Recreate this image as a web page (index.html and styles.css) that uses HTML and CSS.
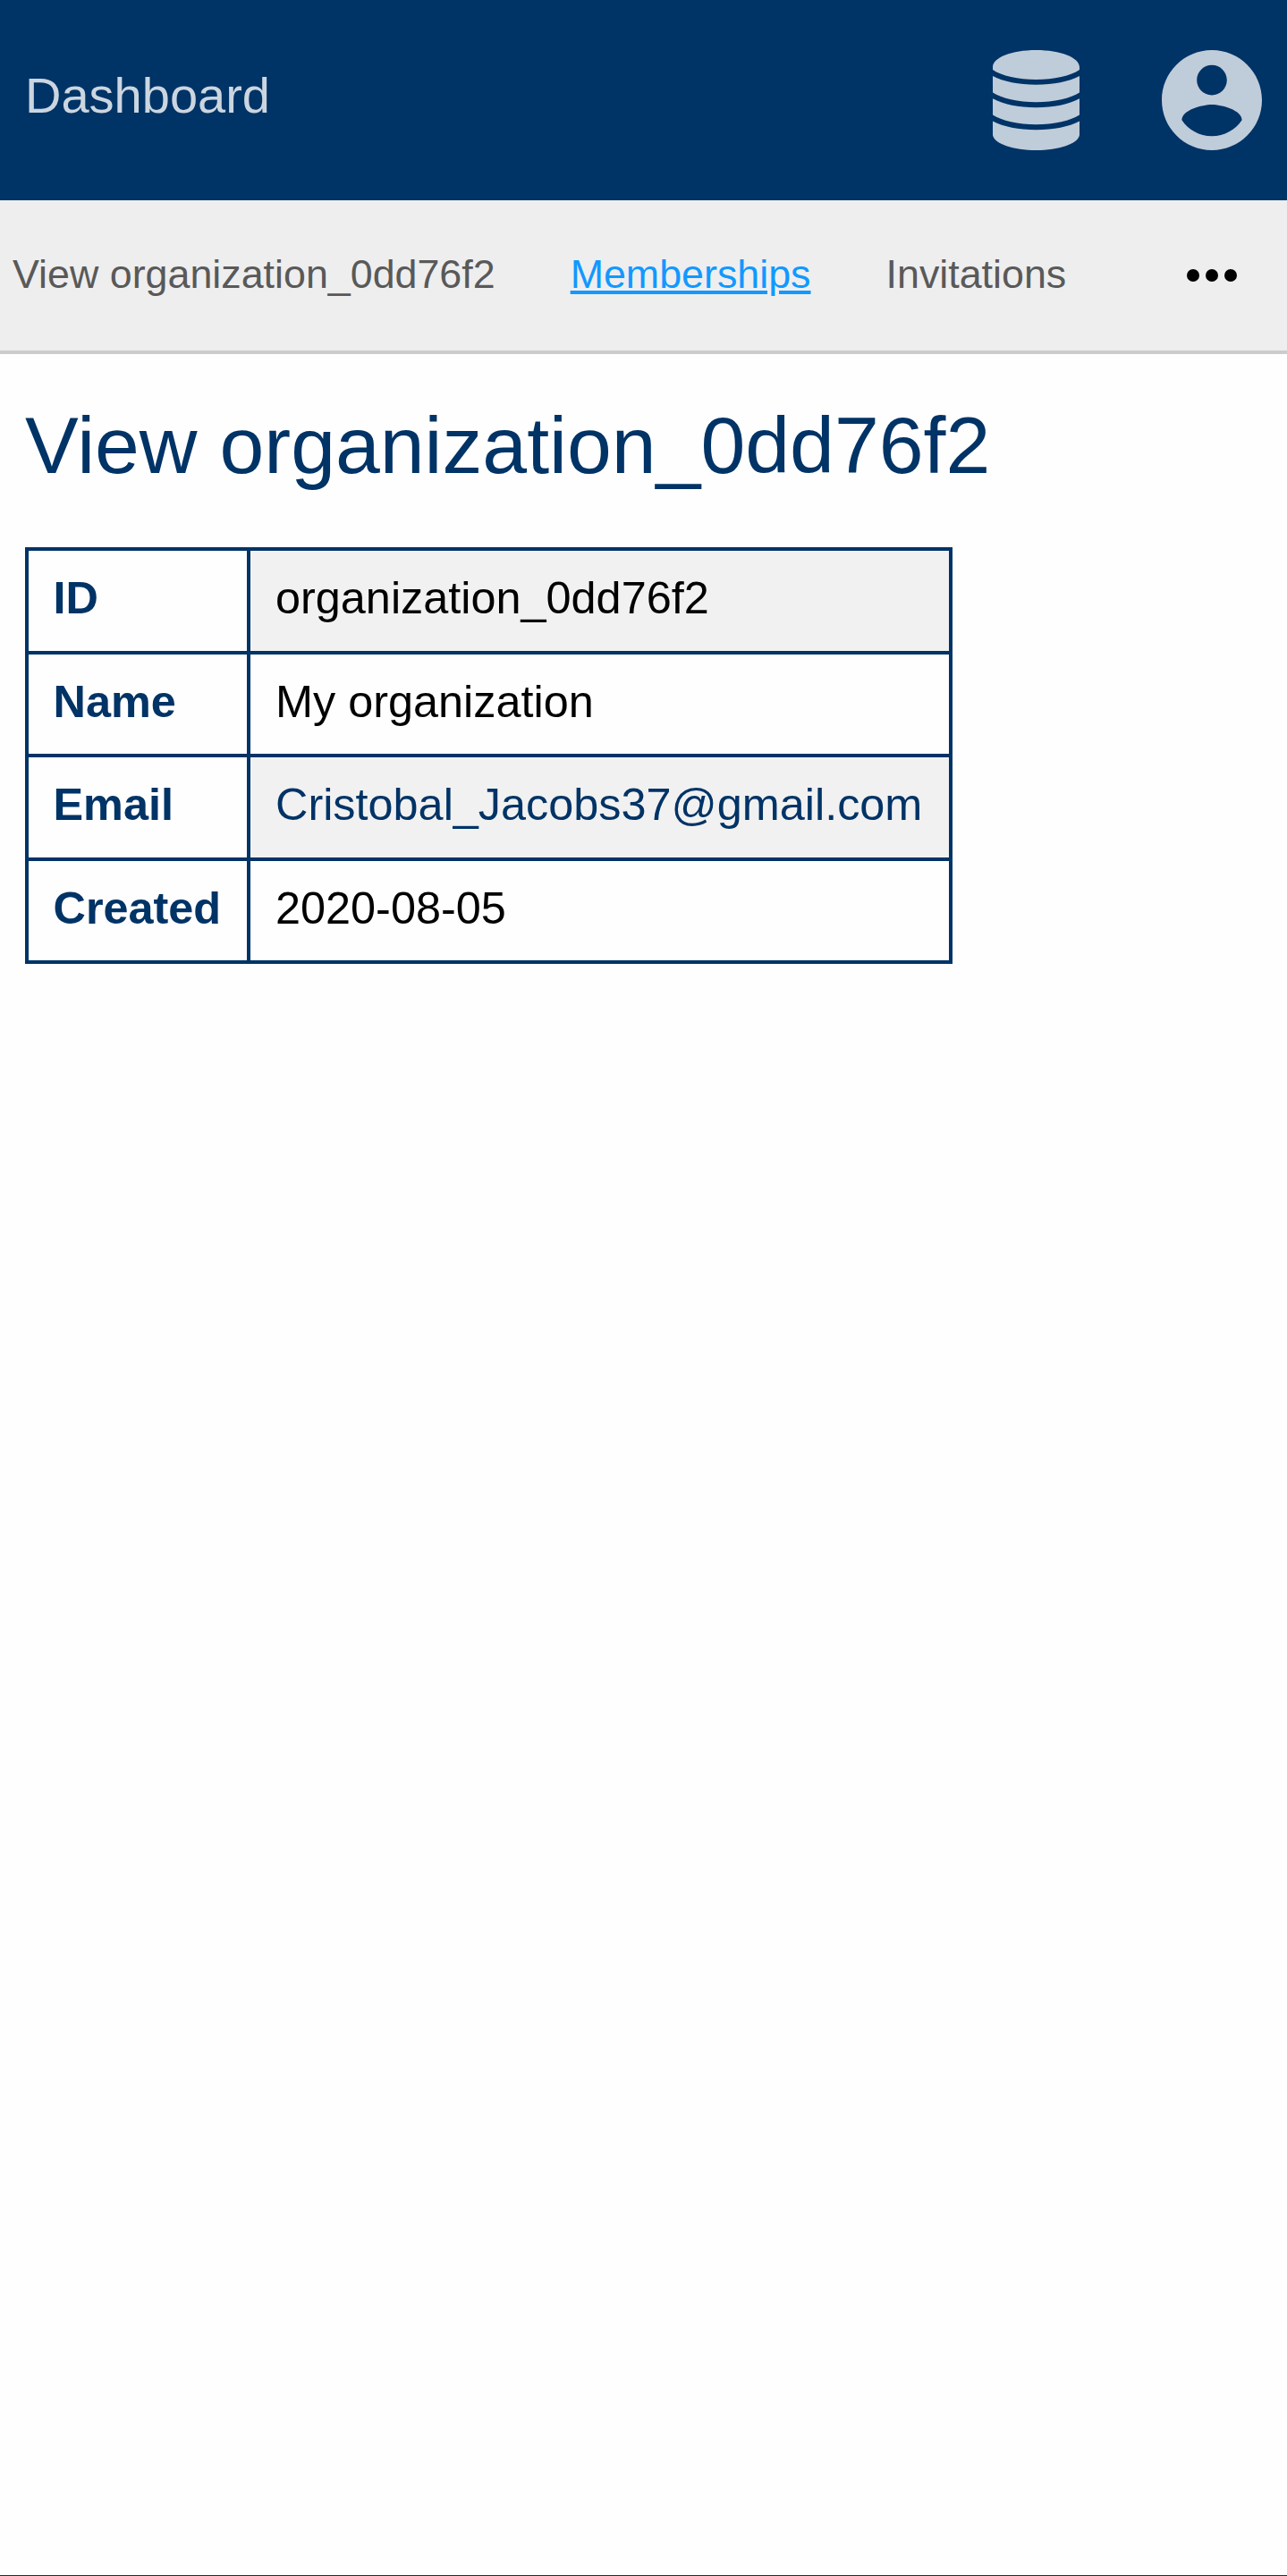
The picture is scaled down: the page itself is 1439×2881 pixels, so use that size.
FILE: index.html
```html
<!DOCTYPE html>
<html lang="en">
<head>
<meta charset="utf-8">
<title>View organization_0dd76f2</title>
<link rel="stylesheet" href="styles.css">
</head>
<body>
<header class="header">
  <a class="brand">Dashboard</a>
  <div class="actions">
    <svg class="icon-db" viewBox="0 0 290 335"><path d="M0 57C0 25 64 0 145 0S290 25 290 57V66C262 86 204 99 145 99S28 86 0 66ZM0 87C36 106 86 116 145 116S254 106 290 87V142C262 161 204 174 145 174S28 161 0 142ZM0 162C36 181 86 192 145 192S254 181 290 162V217C262 236 204 249 145 249S28 236 0 217ZM0 238C36 257 86 267 145 267S254 257 290 238V285C284 314 222 335 145 335S6 314 0 285Z"/></svg>
    <svg class="icon-user" viewBox="2 2 20 20"><path d="M12 2C6.480 2 2 6.480 2 12s4.480 10 10 10 10-4.480 10-10S17.520 2 12 2zm0 3c1.660 0 3 1.340 3 3s-1.340 3-3 3-3-1.340-3-3 1.340-3 3-3zm0 14.200c-2.500 0-4.710-1.280-6-3.220.030-1.990 4-3.080 6-3.080 1.990 0 5.970 1.090 6 3.080-1.290 1.940-3.500 3.220-6 3.220z"/></svg>
  </div>
</header>
<nav class="tabs">
  <a class="tab">View organization_0dd76f2</a>
  <a class="tab tab-active">Memberships</a>
  <a class="tab">Invitations</a>
  <svg class="more" viewBox="0 0 24 24"><circle cx="6" cy="12" r="2"/><circle cx="12" cy="12" r="2"/><circle cx="18" cy="12" r="2"/></svg>
</nav>
<main class="main">
  <h1 class="title">View organization_0dd76f2</h1>
  <table class="details">
    <tr><th>ID</th><td>organization_0dd76f2</td></tr>
    <tr><th>Name</th><td>My organization</td></tr>
    <tr><th>Email</th><td><a class="mail">Cristobal_Jacobs37@gmail.com</a></td></tr>
    <tr><th>Created</th><td>2020-08-05</td></tr>
  </table>
</main>
<footer class="footer"></footer>
</body>
</html>
```
FILE: styles.css
```css
* { box-sizing: border-box; }
body {
  margin: 0;
  height: 2881px;
  display: flex;
  flex-direction: column;
  overflow: hidden;
  background: #fefefe;
  color: #000;
  font-family: "Liberation Sans", Arial, sans-serif;
}
.header {
  flex: none;
  height: 224px;
  padding: 0 28px;
  display: flex;
  align-items: center;
  justify-content: space-between;
  background: #003366;
}
.brand {
  padding-bottom: 10px;
  font-size: 56px;
  line-height: 64px;
  color: #ccd6e0;
}
.actions { display: flex; align-items: center; gap: 92px; }
.actions svg { fill: #bfccd9; }
.icon-db { width: 97px; height: 112px; }
.icon-user { width: 112px; height: 112px; }
.tabs {
  flex: none;
  height: 172px;
  padding: 0 42px 0 14px;
  display: flex;
  align-items: center;
  gap: 84px;
  background: #eee;
  border-bottom: 4px solid #ccc;
}
.tab {
  padding-bottom: 4px;
  font-size: 44.8px;
  line-height: 52px;
  color: #595959;
  white-space: nowrap;
}
.tab-active { color: #1199ff; text-decoration: underline; }
.more { width: 84px; height: 84px; margin-left: auto; }
.main { flex: 1; padding: 50.5px 28px 0; }
.title {
  margin: 0 0 62.5px;
  font-size: 89.6px;
  font-weight: 400;
  line-height: 103px;
  color: #003366;
}
.details {
  width: 1037px;
  border-collapse: collapse;
  font-size: 50.4px;
  line-height: 58px;
}
.details th, .details td {
  height: 115.5px;
  padding: 0 28px 5px;
  border: 4px solid #003366;
  text-align: left;
  white-space: nowrap;
}
.details th { width: 248px; padding-left: 27.5px; color: #003366; }
.details tr:nth-child(odd) td { background: #f1f1f1; }
.mail { color: #003366; }
.footer { flex: none; height: 1px; background: #003366; }
```
